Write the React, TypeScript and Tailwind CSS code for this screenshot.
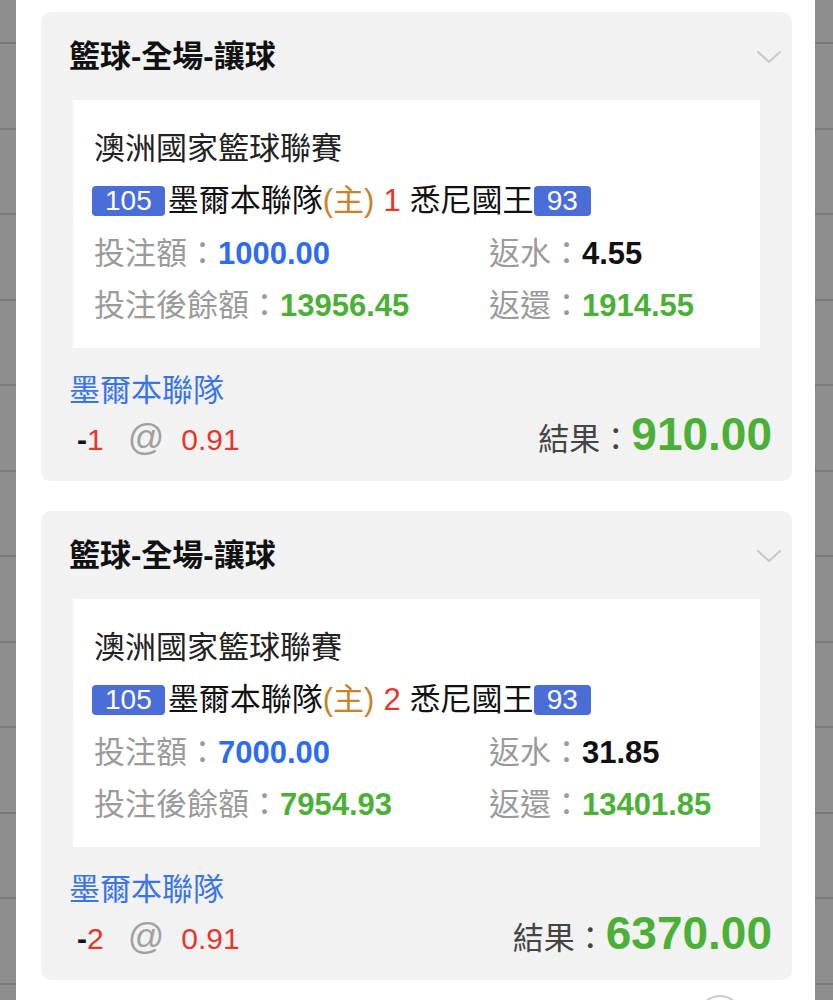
interface Bet {
  id: number;
  title: string;
  league: string;
  homeScore: string;
  home: string;
  line: string;
  away: string;
  awayScore: string;
  stake: string;
  rebate: string;
  balance: string;
  payout: string;
  pick: string;
  handicap: string;
  odds: string;
  result: string;
}

const BETS: Bet[] = [
  {
    id: 1,
    title: "籃球-全場-讓球",
    league: "澳洲國家籃球聯賽",
    homeScore: "105",
    home: "墨爾本聯隊",
    line: "1",
    away: "悉尼國王",
    awayScore: "93",
    stake: "1000.00",
    rebate: "4.55",
    balance: "13956.45",
    payout: "1914.55",
    pick: "墨爾本聯隊",
    handicap: "1",
    odds: "0.91",
    result: "910.00",
  },
  {
    id: 2,
    title: "籃球-全場-讓球",
    league: "澳洲國家籃球聯賽",
    homeScore: "105",
    home: "墨爾本聯隊",
    line: "2",
    away: "悉尼國王",
    awayScore: "93",
    stake: "7000.00",
    rebate: "31.85",
    balance: "7954.93",
    payout: "13401.85",
    pick: "墨爾本聯隊",
    handicap: "2",
    odds: "0.91",
    result: "6370.00",
  },
];

const ROWS = Array.from({ length: 12 });

function SideStrip({ width }: { width: string }) {
  return (
    <div className={`${width} shrink-0 bg-[#8e8e8e] flex flex-col`}>
      <div className="h-[44px] shrink-0 border-b-2 border-[#7b7b7b]" />
      {ROWS.map((_, i) => (
        <div key={i} className="h-[85.5px] shrink-0 border-b-2 border-[#7b7b7b]" />
      ))}
    </div>
  );
}

function Chevron() {
  return (
    <svg width="26" height="16" viewBox="0 0 26 16" className="-mr-[18px]">
      <path d="M2 3 L13 13 L24 3" fill="none" stroke="#c8c8c8" strokeWidth="2" strokeLinecap="round" strokeLinejoin="round" />
    </svg>
  );
}

function BetCard({ bet }: { bet: Bet }) {
  return (
    <div className="bg-[#f2f2f2] rounded-[10px] px-[28px] pb-[24px]">
      {/* Header */}
      <div className="h-[88px] pt-[2px] flex items-center justify-between">
        <h3 className="text-[31px] font-bold text-[#111]">{bet.title}</h3>
        <Chevron />
      </div>

      {/* Detail box */}
      <div className="mx-[4px] bg-white pt-[23px] pb-[17px] pl-[21px] text-[31px]">
        <div className="h-[52px] leading-[52px] text-[#222]">{bet.league}</div>
        <div className="h-[52px] flex items-center text-[#111]">
          <span className="h-[30px] leading-[30px] px-[13px] -ml-[2px] rounded-[4px] bg-[#4a6dd8] text-white text-[28px]">
            {bet.homeScore}
          </span>
          <span className="ml-[3px]">{bet.home}</span>
          <span className="text-[#c9822c]">(主)</span>
          <span className="text-[#e6352b] mx-[9px]">{bet.line}</span>
          <span>{bet.away}</span>
          <span className="h-[30px] leading-[30px] px-[13px] rounded-[4px] bg-[#4a6dd8] text-white text-[28px]">
            {bet.awayScore}
          </span>
        </div>
        <div className="h-[52px] pt-[2px] flex items-center">
          <div className="w-[395px] text-[#9a9a9a]">
            投注額：<span className="font-bold text-[#2d6cf0]">{bet.stake}</span>
          </div>
          <div className="text-[#9a9a9a]">
            返水：<span className="font-bold text-[#111]">{bet.rebate}</span>
          </div>
        </div>
        <div className="h-[52px] pt-[2px] flex items-center">
          <div className="w-[395px] text-[#9a9a9a]">
            投注後餘額：<span className="font-bold text-[#4bb136]">{bet.balance}</span>
          </div>
          <div className="text-[#9a9a9a]">
            返還：<span className="font-bold text-[#4bb136]">{bet.payout}</span>
          </div>
        </div>
      </div>

      {/* Pick */}
      <div className="mt-[23px] h-[40px] leading-[40px] text-[31px] text-[#3a74ea]">{bet.pick}</div>
      <div className="h-[46px] leading-[46px] -mr-[8px] flex items-baseline justify-between">
        <div className="text-[30px] pl-[8px]">
          <span className="text-[#111] font-bold">-</span>
          <span className="text-[#e6352b]">{bet.handicap}</span>
          <span className="ml-[24px] text-[36px] text-[#a0a0a0]">@</span>
          <span className="ml-[17px] text-[#e6352b]">{bet.odds}</span>
        </div>
        <div className="flex items-baseline">
          <span className="text-[31px] text-[#444]">結果：</span>
          <span className="text-[46px] font-bold text-[#4bb136]">{bet.result}</span>
        </div>
      </div>
    </div>
  );
}

export default function App() {
  return (
    <div className="h-[1000px] overflow-hidden flex font-['Liberation_Sans','Noto_Sans_CJK_TC',sans-serif]">
      <SideStrip width="w-[16px]" />
      <div className="flex-1 bg-white pt-[12px] pl-[25px] pr-[23px] flex flex-col gap-[30px]">
        {BETS.map((bet) => (
          <BetCard key={bet.id} bet={bet} />
        ))}
        <div className="-mt-[15px] flex justify-end pr-[50px]">
          <div className="w-[44px] h-[44px] shrink-0 rounded-full border-2 border-[#cfcfcf] bg-white" />
        </div>
      </div>
      <SideStrip width="w-[18px]" />
    </div>
  );
}
